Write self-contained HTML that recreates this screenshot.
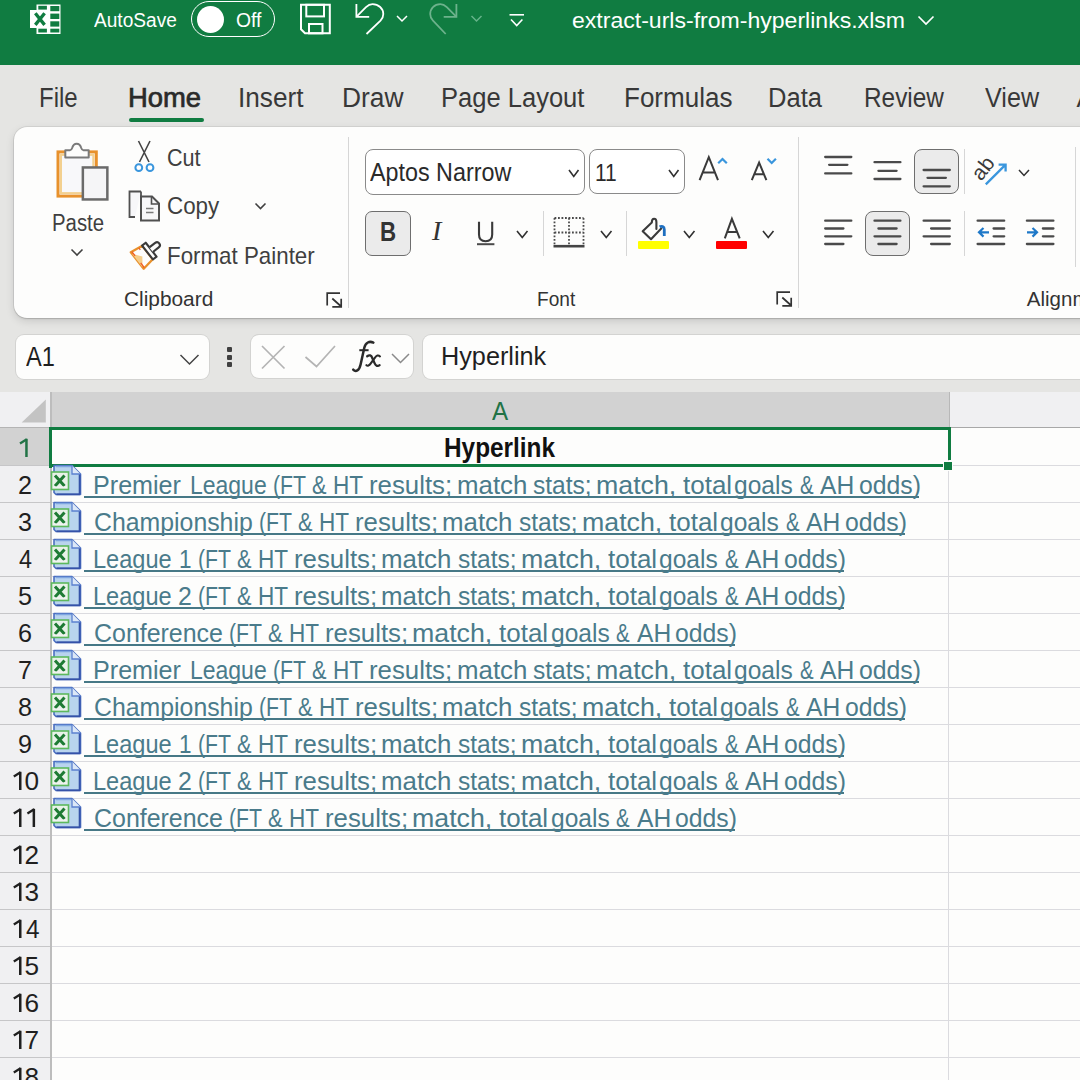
<!DOCTYPE html><html><head><meta charset="utf-8"><style>
html,body{margin:0;padding:0;width:1080px;height:1080px;overflow:hidden;background:#E5E5E3}
.t{position:absolute;white-space:nowrap;transform-origin:0 0}
svg{display:block}
</style></head><body>
<div style="position:absolute;left:0px;top:0px;width:1080px;height:1080px;background:#E5E5E3"></div>
<div style="position:absolute;left:0px;top:0px;width:1080px;height:65px;background:#107C41"></div>
<svg style="position:absolute;left:0px;top:0px;overflow:visible;" width="80" height="40" viewBox="0 0 80 40">
<rect x="36.5" y="4.5" width="24" height="29.5" fill="#fff"/>
<rect x="38.3" y="5.8" width="8.6" height="3.8" fill="#107C41"/>
<rect x="50.3" y="6" width="9" height="5.2" fill="#107C41"/>
<rect x="50.3" y="13.6" width="9" height="5.4" fill="#107C41"/>
<rect x="50.3" y="21.3" width="9" height="5.3" fill="#107C41"/>
<rect x="50.3" y="28.7" width="9" height="3.8" fill="#107C41"/>
<rect x="38.3" y="28.7" width="8.6" height="3.8" fill="#107C41"/>
<rect x="30" y="10" width="18.4" height="18" fill="#fff"/>
<path d="M35.3 13.3 L44.6 24.9 M44.6 13.3 L35.3 24.9" stroke="#107C41" stroke-width="3.3" fill="none"/>
</svg>
<div style="position:absolute;left:191px;top:1px;width:84px;height:36px;box-sizing:border-box;border:1.5px solid #fff;border-radius:18px"></div>
<div style="position:absolute;left:197px;top:5.5px;width:27px;height:27px;background:#fff;border-radius:50%"></div>
<svg style="position:absolute;left:290px;top:0px;overflow:visible;" width="50" height="40" viewBox="0 0 50 40">
<path d="M11 4.8 H39.8 V33.3 H15 L11 29.3 Z" fill="none" stroke="#fff" stroke-width="2"/>
<rect x="16.3" y="4.8" width="17.7" height="11.6" fill="none" stroke="#fff" stroke-width="2"/>
<rect x="19" y="24" width="13.5" height="9.3" fill="none" stroke="#fff" stroke-width="2"/>
</svg>
<svg style="position:absolute;left:340px;top:0px;overflow:visible;" width="80" height="40" viewBox="0 0 80 40">
<path d="M16.4 4 V16.8 H29.2" fill="none" stroke="#fff" stroke-width="1.8"/>
<path d="M16.8 16.4 L26 7.2 C28.5 4.8 30.5 4.2 32.5 4.2 C38.5 4.2 43.3 8.5 43.3 14 C43.3 16.8 42.2 19 40.5 20.7 L26.5 34" fill="none" stroke="#fff" stroke-width="1.8"/>
<path d="M57 16 L62 21 L67 16" fill="none" stroke="#fff" stroke-width="1.5"/>
</svg>
<svg style="position:absolute;left:420px;top:0px;overflow:visible;" width="80" height="40" viewBox="0 0 80 40">
<path d="M36.4 4 V16.8 H23.7" fill="none" stroke="#6DB28C" stroke-width="1.8"/>
<path d="M36 16.4 L26.8 7.2 C24.3 4.8 22.3 4.2 20.3 4.2 C14.3 4.2 10.2 8.5 10.2 14 C10.2 16.8 11.3 19 13 20.7 L25.7 34" fill="none" stroke="#6DB28C" stroke-width="1.8"/>
<path d="M51.5 16 L56.5 21 L61.5 16" fill="none" stroke="#66b38a" stroke-width="1.5"/>
</svg>
<svg style="position:absolute;left:500px;top:0px;overflow:visible;" width="40" height="40" viewBox="0 0 40 40">
<path d="M9.5 14.8 H24" stroke="#fff" stroke-width="1.6"/>
<path d="M11 19.5 L16.7 25.5 L22.4 19.5" fill="none" stroke="#fff" stroke-width="1.6"/>
</svg>
<svg style="position:absolute;left:910px;top:0px;overflow:visible;" width="30" height="40" viewBox="0 0 30 40"><path d="M8.5 16.5 L16 24 L23.5 16.5" fill="none" stroke="#fff" stroke-width="1.7"/></svg>
<div style="position:absolute;left:129px;top:118px;width:75px;height:4px;background:#107C41;border-radius:2px"></div>
<div style="position:absolute;left:14px;top:127px;width:1200px;height:191px;background:#FDFDFC;border-radius:13px;box-shadow:0 0 0 0.7px rgba(0,0,0,0.09), 0 1px 1.5px rgba(0,0,0,0.12), 0 3px 9px rgba(0,0,0,0.13)"></div>
<svg style="position:absolute;left:40px;top:135px;overflow:visible;" width="80" height="80" viewBox="0 0 80 80">
<rect x="18" y="16.9" width="38.3" height="44.2" fill="#F8F8FA" stroke="#E8912C" stroke-width="3"/>
<rect x="20.9" y="19.8" width="32.5" height="38.4" fill="none" stroke="#F3D08F" stroke-width="2.2"/>
<path d="M25.3 15.2 H30 C31.5 15.2 31.8 14 32.2 12.8 C33 10 34.5 8.7 36.7 8.7 C38.9 8.7 40.4 10 41.2 12.8 C41.6 14 41.9 15.2 43.4 15.2 H48.7 V22.5 H25.3 Z" fill="#FDFDFC" stroke="#7a7a7a" stroke-width="2" stroke-linejoin="round"/>
<rect x="42.85" y="32.45" width="24.5" height="32" fill="#F5F5F7" stroke="#6a6a6a" stroke-width="2.5"/>
</svg>
<svg style="position:absolute;left:60px;top:240px;overflow:visible;" width="30" height="20" viewBox="0 0 30 20"><path d="M11.5 9.5 L17 15 L22.5 9.5" fill="none" stroke="#404040" stroke-width="1.6"/></svg>
<svg style="position:absolute;left:125px;top:135px;overflow:visible;" width="40" height="40" viewBox="0 0 40 40">
<path d="M13.5 6 L24 27 M25 6 L14.5 27" stroke="#444" stroke-width="1.6" fill="none"/>
<circle cx="13.8" cy="32.7" r="3.4" fill="#fff" stroke="#3A96DD" stroke-width="2"/>
<circle cx="25" cy="32.7" r="3.4" fill="#fff" stroke="#3A96DD" stroke-width="2"/>
</svg>
<svg style="position:absolute;left:120px;top:185px;overflow:visible;" width="50" height="45" viewBox="0 0 50 45">
<path d="M21 6.5 H9.5 V32 H15" fill="#F7F7F9" stroke="#505050" stroke-width="1.8"/>
<path d="M21 6.5 V11" stroke="#505050" stroke-width="1.8"/>
<path d="M21 11.5 H32 L39 18.5 V35.5 H21 Z" fill="#F7F7F9" stroke="#505050" stroke-width="2"/>
<path d="M31.5 11.5 V19 H39" fill="none" stroke="#505050" stroke-width="1.6"/>
<path d="M26 23.5 H33.5 M26 27.5 H33.5" stroke="#7a7a7a" stroke-width="1.6"/>
</svg>
<svg style="position:absolute;left:245px;top:195px;overflow:visible;" width="30" height="20" viewBox="0 0 30 20"><path d="M10.5 8.5 L15.5 13.5 L20.5 8.5" fill="none" stroke="#404040" stroke-width="1.6"/></svg>
<svg style="position:absolute;left:120px;top:230px;overflow:visible;" width="45" height="45" viewBox="0 0 45 45">
<g transform="translate(27.5,22.5) rotate(52)">
<path d="M-8.5 0 L8.5 0 L10.5 13 L-10.5 13 Z" fill="#FDFDFC" stroke="#E8912C" stroke-width="2.3" stroke-linejoin="round"/>
<path d="M-8.5 13 L0 6.5 L8.5 13 Z" fill="#F5CE8A"/>
<path d="M-10.3 11.8 L-5 11.8 M4 11.8 L10 11.8 M-9 4 L-6.5 4" stroke="#F15A24" stroke-width="1.3"/>
<rect x="-8.8" y="-4.6" width="17.6" height="4.6" fill="#FDFDFC" stroke="#3a3a3a" stroke-width="2.1" stroke-linejoin="round"/>
<path d="M-2.9 -4.6 V-12 A2.9 2.9 0 0 1 2.9 -12 V-4.6" fill="#FDFDFC" stroke="#3a3a3a" stroke-width="2.1"/>
</g>
</svg>
<svg style="position:absolute;left:325.8px;top:291.5px;overflow:visible;" width="20" height="20" viewBox="0 0 20 20"><path d="M1.2 13.5 V1.2 H14" fill="none" stroke="#333" stroke-width="1.7"/><path d="M6.3 6.5 L15.2 14.5 M15.2 6.8 V14.9 H6.3" fill="none" stroke="#333" stroke-width="1.7"/></svg>
<div style="position:absolute;left:348px;top:137px;width:1px;height:171px;background:#D6D6D6"></div>
<div style="position:absolute;left:365px;top:149px;width:220px;height:45.5px;box-sizing:border-box;border:1.2px solid #8A8A8A;border-radius:8px;background:#fff"></div>
<svg style="position:absolute;left:567px;top:167.5px;overflow:visible;" width="13.5" height="10.5" viewBox="0 0 13.5 10.5"><path d="M2 2 L6.75 8.5 L11.5 2" fill="none" stroke="#303030" stroke-width="1.6"/></svg>
<div style="position:absolute;left:589px;top:149px;width:96px;height:44.5px;box-sizing:border-box;border:1.2px solid #8A8A8A;border-radius:8px;background:#fff"></div>
<svg style="position:absolute;left:667px;top:167.5px;overflow:visible;" width="13.5" height="10.5" viewBox="0 0 13.5 10.5"><path d="M2 2 L6.75 8.5 L11.5 2" fill="none" stroke="#303030" stroke-width="1.6"/></svg>
<svg style="position:absolute;left:0px;top:0px;overflow:visible;pointer-events:none;" width="1080" height="300" viewBox="0 0 1080 300">
<path d="M699.6 180.2 L708.8 157.2 L718 180.2 M702.6 172.6 H715" fill="none" stroke="#3a3a3a" stroke-width="2"/>
<path d="M718.2 163.3 L722.5 159 L726.8 163.3" fill="none" stroke="#3A96DD" stroke-width="2.2"/>
<path d="M751.8 180.2 L759.1 162.6 L766.4 180.2 M754.3 174.3 H764" fill="none" stroke="#3a3a3a" stroke-width="2"/>
<path d="M767.5 158.8 L771.7 163 L775.9 158.8" fill="none" stroke="#3A96DD" stroke-width="2.2"/>
<path d="M724.8 238.4 L731.9 218.8 L739.7 238.4 M727.3 232 H737.3" fill="none" stroke="#3a3a3a" stroke-width="2"/>
</svg>
<div style="position:absolute;left:365px;top:210.7px;width:46px;height:45.3px;box-sizing:border-box;border:1.5px solid #6E6E6E;border-radius:7px;background:#EBEBEB"></div>
<svg style="position:absolute;left:0px;top:0px;overflow:visible;pointer-events:none;" width="1080" height="300" viewBox="0 0 1080 300"><path d="M479 221.8 V234.6 C479 239.2 481.7 241.2 485.6 241.2 C489.5 241.2 492.2 239.2 492.2 234.6 V221.8" fill="none" stroke="#3a3a3a" stroke-width="2.1"/><path d="M477 244.2 H494.4" stroke="#4a4a4a" stroke-width="2"/></svg>
<svg style="position:absolute;left:515px;top:229px;overflow:visible;" width="14.5" height="10.5" viewBox="0 0 14.5 10.5"><path d="M2 2 L7.25 8.5 L12.5 2" fill="none" stroke="#303030" stroke-width="1.6"/></svg>
<div style="position:absolute;left:542.5px;top:210.7px;width:1px;height:45.7px;background:#D6D6D6"></div>
<svg style="position:absolute;left:550px;top:214px;overflow:visible;" width="40" height="40" viewBox="0 0 40 40">
<g stroke="#4a4a4a" stroke-width="1.8" stroke-dasharray="1.8 1.7" fill="none">
<path d="M4.5 4 H33.5 M4.5 18.5 H33.5 M4.5 4 V31 M19 4 V31 M33.5 4 V31"/>
</g>
<path d="M3.5 32.2 H34.5" stroke="#444" stroke-width="2.6"/>
</svg>
<svg style="position:absolute;left:598.5px;top:229px;overflow:visible;" width="14.5" height="10.5" viewBox="0 0 14.5 10.5"><path d="M2 2 L7.25 8.5 L12.5 2" fill="none" stroke="#303030" stroke-width="1.6"/></svg>
<div style="position:absolute;left:626px;top:210.7px;width:1px;height:45.7px;background:#D6D6D6"></div>
<svg style="position:absolute;left:635px;top:212px;overflow:visible;" width="40" height="40" viewBox="0 0 40 40">
<path d="M16.8 10.5 L7.7 19.3 L16 27.2 L26.5 16.3 Z" fill="#FDFDFC" stroke="none"/>
<path d="M21.4 17 V10 C21.4 8 20.5 6.8 19.1 6.8 C17.7 6.8 16.8 8 16.8 10.5 L7.7 19.3 L16 27.2 L26.2 16.6" fill="none" stroke="#3a3a3a" stroke-width="2.1" stroke-linejoin="round" stroke-linecap="round"/>
<path d="M24.6 14.8 C26.5 13.8 29.3 14.5 29.3 17.5 V24" fill="none" stroke="#1E6FC0" stroke-width="2.8"/>
</svg>
<div style="position:absolute;left:637.6px;top:241.2px;width:31.1px;height:7.5px;background:#FFFF00;border-radius:1px"></div>
<svg style="position:absolute;left:682px;top:229px;overflow:visible;" width="14.5" height="10.5" viewBox="0 0 14.5 10.5"><path d="M2 2 L7.25 8.5 L12.5 2" fill="none" stroke="#303030" stroke-width="1.6"/></svg>
<div style="position:absolute;left:716.3px;top:241.2px;width:30.7px;height:7.7px;background:#FF0000;border-radius:1px"></div>
<svg style="position:absolute;left:760.5px;top:229px;overflow:visible;" width="14.5" height="10.5" viewBox="0 0 14.5 10.5"><path d="M2 2 L7.25 8.5 L12.5 2" fill="none" stroke="#303030" stroke-width="1.6"/></svg>
<svg style="position:absolute;left:775.6px;top:291.3px;overflow:visible;" width="20" height="20" viewBox="0 0 20 20"><path d="M1.2 13.5 V1.2 H14" fill="none" stroke="#333" stroke-width="1.7"/><path d="M6.3 6.5 L15.2 14.5 M15.2 6.8 V14.9 H6.3" fill="none" stroke="#333" stroke-width="1.7"/></svg>
<div style="position:absolute;left:798px;top:137px;width:1px;height:171px;background:#D6D6D6"></div>
<div style="position:absolute;left:914px;top:149.3px;width:45.4px;height:44.8px;box-sizing:border-box;border:1.5px solid #6E6E6E;border-radius:8px;background:#EBEBEB"></div>
<div style="position:absolute;left:864.8px;top:210.9px;width:45.4px;height:44.8px;box-sizing:border-box;border:1.5px solid #6E6E6E;border-radius:8px;background:#EBEBEB"></div>
<svg style="position:absolute;left:0px;top:0px;overflow:visible;pointer-events:none;" width="1080" height="1080" viewBox="0 0 1080 1080"><path d="M825.2 157 H851.3" stroke="#4a4a4a" stroke-width="2.3" stroke-linecap="round"/><path d="M829.1 164.8 H847.4" stroke="#4a4a4a" stroke-width="2.3" stroke-linecap="round"/><path d="M825.2 173.4 H851.3" stroke="#4a4a4a" stroke-width="2.3" stroke-linecap="round"/></svg>
<svg style="position:absolute;left:0px;top:0px;overflow:visible;pointer-events:none;" width="1080" height="1080" viewBox="0 0 1080 1080"><path d="M874.5 162.2 H900.4" stroke="#4a4a4a" stroke-width="2.3" stroke-linecap="round"/><path d="M878.4 170.8 H896.6" stroke="#4a4a4a" stroke-width="2.3" stroke-linecap="round"/><path d="M874.5 179 H900.4" stroke="#4a4a4a" stroke-width="2.3" stroke-linecap="round"/></svg>
<svg style="position:absolute;left:0px;top:0px;overflow:visible;pointer-events:none;" width="1080" height="1080" viewBox="0 0 1080 1080"><path d="M923.6 170 H949.8" stroke="#4a4a4a" stroke-width="2.3" stroke-linecap="round"/><path d="M927.5 177.8 H945.9" stroke="#4a4a4a" stroke-width="2.3" stroke-linecap="round"/><path d="M923.6 186.3 H949.8" stroke="#4a4a4a" stroke-width="2.3" stroke-linecap="round"/></svg>
<svg style="position:absolute;left:0px;top:0px;overflow:visible;pointer-events:none;" width="1080" height="1080" viewBox="0 0 1080 1080"><path d="M825.2 220.7 H851.3" stroke="#4a4a4a" stroke-width="2.3" stroke-linecap="round"/><path d="M825.2 228.5 H843.4" stroke="#4a4a4a" stroke-width="2.3" stroke-linecap="round"/><path d="M825.2 236.3 H851.3" stroke="#4a4a4a" stroke-width="2.3" stroke-linecap="round"/><path d="M825.2 244 H843.4" stroke="#4a4a4a" stroke-width="2.3" stroke-linecap="round"/></svg>
<svg style="position:absolute;left:0px;top:0px;overflow:visible;pointer-events:none;" width="1080" height="1080" viewBox="0 0 1080 1080"><path d="M874.5 220.7 H900.4" stroke="#4a4a4a" stroke-width="2.3" stroke-linecap="round"/><path d="M878.4 228.5 H896.6" stroke="#4a4a4a" stroke-width="2.3" stroke-linecap="round"/><path d="M874.5 236.3 H900.4" stroke="#4a4a4a" stroke-width="2.3" stroke-linecap="round"/><path d="M878.4 244 H896.6" stroke="#4a4a4a" stroke-width="2.3" stroke-linecap="round"/></svg>
<svg style="position:absolute;left:0px;top:0px;overflow:visible;pointer-events:none;" width="1080" height="1080" viewBox="0 0 1080 1080"><path d="M923.6 220.7 H949.8" stroke="#4a4a4a" stroke-width="2.3" stroke-linecap="round"/><path d="M931.1 228.5 H949.8" stroke="#4a4a4a" stroke-width="2.3" stroke-linecap="round"/><path d="M923.6 236.3 H949.8" stroke="#4a4a4a" stroke-width="2.3" stroke-linecap="round"/><path d="M931.1 244 H949.8" stroke="#4a4a4a" stroke-width="2.3" stroke-linecap="round"/></svg>
<svg style="position:absolute;left:0px;top:0px;overflow:visible;pointer-events:none;" width="1080" height="1080" viewBox="0 0 1080 1080"><path d="M977.6 220.7 H1004.1999999999999" stroke="#4a4a4a" stroke-width="2.3" stroke-linecap="round"/><path d="M993.6 228.5 H1004.1999999999999" stroke="#4a4a4a" stroke-width="2.3" stroke-linecap="round"/><path d="M993.6 236.3 H1004.1999999999999" stroke="#4a4a4a" stroke-width="2.3" stroke-linecap="round"/><path d="M977.6 244 H1004.1999999999999" stroke="#4a4a4a" stroke-width="2.3" stroke-linecap="round"/></svg>
<svg style="position:absolute;left:0px;top:0px;overflow:visible;pointer-events:none;" width="1080" height="1080" viewBox="0 0 1080 1080"><path d="M1026.8999999999999 220.7 H1053.4" stroke="#4a4a4a" stroke-width="2.3" stroke-linecap="round"/><path d="M1042.8999999999999 228.5 H1053.4" stroke="#4a4a4a" stroke-width="2.3" stroke-linecap="round"/><path d="M1042.8999999999999 236.3 H1053.4" stroke="#4a4a4a" stroke-width="2.3" stroke-linecap="round"/><path d="M1026.8999999999999 244 H1053.4" stroke="#4a4a4a" stroke-width="2.3" stroke-linecap="round"/></svg>
<svg style="position:absolute;left:970px;top:220px;overflow:visible;" width="40" height="25" viewBox="0 0 40 25"><path d="M19 12.3 H9 M13.5 8 L9 12.3 L13.5 16.6" fill="none" stroke="#1E78C8" stroke-width="2.2"/></svg>
<svg style="position:absolute;left:1020px;top:220px;overflow:visible;" width="40" height="25" viewBox="0 0 40 25"><path d="M7 12.3 H17 M12.5 8 L17 12.3 L12.5 16.6" fill="none" stroke="#1E78C8" stroke-width="2.2"/></svg>
<div style="position:absolute;left:963.9px;top:149px;width:1px;height:45px;background:#D6D6D6"></div>
<div style="position:absolute;left:963.9px;top:211px;width:1px;height:45px;background:#D6D6D6"></div>
<svg style="position:absolute;left:970px;top:150px;overflow:visible;" width="45" height="40" viewBox="0 0 45 40">
<text x="0" y="0" transform="translate(11.3,31.8) rotate(-52)" font-family="Liberation Sans" font-size="21" fill="#3a3a3a">ab</text>
<path d="M15.8 34.4 L35.6 14.6 M28.6 14.6 H35.6 V21.6" fill="none" stroke="#3A96DD" stroke-width="2.3"/>
</svg>
<svg style="position:absolute;left:1016.8px;top:167.7px;overflow:visible;" width="14" height="9.5" viewBox="0 0 14 9.5"><path d="M2 2 L7.0 7.5 L12 2" fill="none" stroke="#303030" stroke-width="1.5"/></svg>
<div style="position:absolute;left:1074.8px;top:146.7px;width:1px;height:120px;background:#D6D6D6"></div>
<div style="position:absolute;left:15.6px;top:334.5px;width:193.7px;height:44.3px;background:#FDFDFC;border-radius:8px;box-shadow:0 0 0 1px rgba(0,0,0,0.08)"></div>
<svg style="position:absolute;left:175px;top:350px;overflow:visible;" width="30" height="20" viewBox="0 0 30 20"><path d="M5.5 5 L14.5 14 L23.5 5" fill="none" stroke="#444" stroke-width="1.5"/></svg>
<div style="position:absolute;left:226.7px;top:347.2px;width:5.5px;height:5px;background:#404040;border-radius:1px"></div>
<div style="position:absolute;left:226.7px;top:354.7px;width:5.5px;height:5px;background:#404040;border-radius:1px"></div>
<div style="position:absolute;left:226.7px;top:362.2px;width:5.5px;height:5px;background:#404040;border-radius:1px"></div>
<div style="position:absolute;left:250.7px;top:335px;width:162px;height:43.3px;background:#FDFDFC;border-radius:8px;box-shadow:0 0 0 1px rgba(0,0,0,0.08)"></div>
<svg style="position:absolute;left:255px;top:340px;overflow:visible;" width="90" height="35" viewBox="0 0 90 35">
<path d="M7 6 L29.5 28.5 M29.5 6 L7 28.5" stroke="#B4B4B4" stroke-width="1.7" fill="none"/>
<path d="M50.5 17 L61.5 26.5 L80 6" stroke="#B4B4B4" stroke-width="1.7" fill="none"/>
</svg>
<svg style="position:absolute;left:0px;top:0px;overflow:visible;pointer-events:none;" width="1080" height="400" viewBox="0 0 1080 400">
<path d="M353.2 369.6 C 355.8 372.3, 359.2 370.8, 360.6 364.5 L 364.3 347.8 C 365.6 342.4, 369.4 340.8, 373.4 342.6" fill="none" stroke="#2a2a2a" stroke-width="2.5" stroke-linecap="round"/>
<path d="M359.3 350.2 H368.6" stroke="#2a2a2a" stroke-width="2"/>
<path d="M367.2 356.2 C 369.4 354.6, 371.2 355.2, 372.3 358 L 374.8 363.6 C 375.8 366, 377.8 366.6, 379.6 365.2" fill="none" stroke="#2a2a2a" stroke-width="2.3" stroke-linecap="round"/>
<path d="M380 356.4 C 378.3 354.8, 376.6 355.4, 374.8 357.8 L 370.4 363.8 C 369.2 365.6, 367.6 366.2, 366.4 365.2" fill="none" stroke="#2a2a2a" stroke-width="2.1" stroke-linecap="round"/>
</svg>
<svg style="position:absolute;left:388px;top:348px;overflow:visible;" width="26" height="20" viewBox="0 0 26 20"><path d="M4 6 L12.5 14.5 L21 6" fill="none" stroke="#8a8a8a" stroke-width="1.5"/></svg>
<div style="position:absolute;left:423px;top:335px;width:700px;height:44px;background:#FDFDFC;border-radius:8px;box-shadow:0 0 0 1px rgba(0,0,0,0.08)"></div>
<div style="position:absolute;left:0px;top:392px;width:50px;height:36px;background:#F0F0F2"></div>
<svg style="position:absolute;left:0px;top:392px;overflow:visible;" width="50" height="36" viewBox="0 0 50 36"><path d="M45.8 7.6 V30.5 H21.7 Z" fill="#C3C3C3"/></svg>
<div style="position:absolute;left:51px;top:392px;width:898px;height:36px;background:#D2D2D2"></div>
<div style="position:absolute;left:949px;top:392px;width:131px;height:36px;background:#F0F0F2"></div>
<div style="position:absolute;left:949px;top:392px;width:1px;height:36px;background:#B8B8B8"></div>
<div style="position:absolute;left:0px;top:428px;width:50px;height:652px;background:#F0F0F2"></div>
<div style="position:absolute;left:0px;top:428px;width:50px;height:37.5px;background:#D2D2D2"></div>
<div style="position:absolute;left:50px;top:392px;width:1.6px;height:700px;background:#BDBDBD"></div>
<div style="position:absolute;left:51.6px;top:428px;width:1030px;height:652px;background:#FDFDFC"></div>
<div style="position:absolute;left:949px;top:427px;width:131px;height:1.3px;background:#A8A8A8"></div>
<div style="position:absolute;left:0px;top:427px;width:50px;height:1.3px;background:#B4B4B4"></div>
<div style="position:absolute;left:51.6px;top:465px;width:1030px;height:1px;background:#DBDBDF"></div>
<div style="position:absolute;left:0px;top:465px;width:50px;height:1px;background:#C6C6C8"></div>
<div style="position:absolute;left:51.6px;top:502px;width:1030px;height:1px;background:#DBDBDF"></div>
<div style="position:absolute;left:0px;top:502px;width:50px;height:1px;background:#C6C6C8"></div>
<div style="position:absolute;left:51.6px;top:539px;width:1030px;height:1px;background:#DBDBDF"></div>
<div style="position:absolute;left:0px;top:539px;width:50px;height:1px;background:#C6C6C8"></div>
<div style="position:absolute;left:51.6px;top:576px;width:1030px;height:1px;background:#DBDBDF"></div>
<div style="position:absolute;left:0px;top:576px;width:50px;height:1px;background:#C6C6C8"></div>
<div style="position:absolute;left:51.6px;top:613px;width:1030px;height:1px;background:#DBDBDF"></div>
<div style="position:absolute;left:0px;top:613px;width:50px;height:1px;background:#C6C6C8"></div>
<div style="position:absolute;left:51.6px;top:650px;width:1030px;height:1px;background:#DBDBDF"></div>
<div style="position:absolute;left:0px;top:650px;width:50px;height:1px;background:#C6C6C8"></div>
<div style="position:absolute;left:51.6px;top:687px;width:1030px;height:1px;background:#DBDBDF"></div>
<div style="position:absolute;left:0px;top:687px;width:50px;height:1px;background:#C6C6C8"></div>
<div style="position:absolute;left:51.6px;top:724px;width:1030px;height:1px;background:#DBDBDF"></div>
<div style="position:absolute;left:0px;top:724px;width:50px;height:1px;background:#C6C6C8"></div>
<div style="position:absolute;left:51.6px;top:761px;width:1030px;height:1px;background:#DBDBDF"></div>
<div style="position:absolute;left:0px;top:761px;width:50px;height:1px;background:#C6C6C8"></div>
<div style="position:absolute;left:51.6px;top:798px;width:1030px;height:1px;background:#DBDBDF"></div>
<div style="position:absolute;left:0px;top:798px;width:50px;height:1px;background:#C6C6C8"></div>
<div style="position:absolute;left:51.6px;top:835px;width:1030px;height:1px;background:#DBDBDF"></div>
<div style="position:absolute;left:0px;top:835px;width:50px;height:1px;background:#C6C6C8"></div>
<div style="position:absolute;left:51.6px;top:872px;width:1030px;height:1px;background:#DBDBDF"></div>
<div style="position:absolute;left:0px;top:872px;width:50px;height:1px;background:#C6C6C8"></div>
<div style="position:absolute;left:51.6px;top:909px;width:1030px;height:1px;background:#DBDBDF"></div>
<div style="position:absolute;left:0px;top:909px;width:50px;height:1px;background:#C6C6C8"></div>
<div style="position:absolute;left:51.6px;top:946px;width:1030px;height:1px;background:#DBDBDF"></div>
<div style="position:absolute;left:0px;top:946px;width:50px;height:1px;background:#C6C6C8"></div>
<div style="position:absolute;left:51.6px;top:983px;width:1030px;height:1px;background:#DBDBDF"></div>
<div style="position:absolute;left:0px;top:983px;width:50px;height:1px;background:#C6C6C8"></div>
<div style="position:absolute;left:51.6px;top:1020px;width:1030px;height:1px;background:#DBDBDF"></div>
<div style="position:absolute;left:0px;top:1020px;width:50px;height:1px;background:#C6C6C8"></div>
<div style="position:absolute;left:51.6px;top:1057px;width:1030px;height:1px;background:#DBDBDF"></div>
<div style="position:absolute;left:0px;top:1057px;width:50px;height:1px;background:#C6C6C8"></div>
<div style="position:absolute;left:51.6px;top:1094px;width:1030px;height:1px;background:#DBDBDF"></div>
<div style="position:absolute;left:0px;top:1094px;width:50px;height:1px;background:#C6C6C8"></div>
<div style="position:absolute;left:948px;top:428px;width:1px;height:700px;background:#DBDBDF"></div>
<svg style="position:absolute;left:0px;top:0px;overflow:visible;pointer-events:none;" width="60" height="1080" viewBox="0 0 60 1080"><path d="M26.45 438.8 V457" stroke="#217346" stroke-width="2.5"/><path d="M26.8 439.3 L20.0 443.4" stroke="#217346" stroke-width="2.3"/></svg>
<svg style="position:absolute;left:0px;top:0px;overflow:visible;pointer-events:none;" width="60" height="1080" viewBox="0 0 60 1080"><path d="M20.25 771.8 V790" stroke="#1F1F1F" stroke-width="2.5"/><path d="M20.6 772.3 L13.8 776.4" stroke="#1F1F1F" stroke-width="2.3"/></svg>
<svg style="position:absolute;left:0px;top:0px;overflow:visible;pointer-events:none;" width="60" height="1080" viewBox="0 0 60 1080"><path d="M20.25 808.8 V827" stroke="#1F1F1F" stroke-width="2.5"/><path d="M20.6 809.3 L13.8 813.4" stroke="#1F1F1F" stroke-width="2.3"/></svg>
<svg style="position:absolute;left:0px;top:0px;overflow:visible;pointer-events:none;" width="60" height="1080" viewBox="0 0 60 1080"><path d="M33.85 808.8 V827" stroke="#1F1F1F" stroke-width="2.5"/><path d="M34.2 809.3 L27.400000000000002 813.4" stroke="#1F1F1F" stroke-width="2.3"/></svg>
<svg style="position:absolute;left:0px;top:0px;overflow:visible;pointer-events:none;" width="60" height="1080" viewBox="0 0 60 1080"><path d="M20.25 845.8 V864" stroke="#1F1F1F" stroke-width="2.5"/><path d="M20.6 846.3 L13.8 850.4" stroke="#1F1F1F" stroke-width="2.3"/></svg>
<svg style="position:absolute;left:0px;top:0px;overflow:visible;pointer-events:none;" width="60" height="1080" viewBox="0 0 60 1080"><path d="M20.25 882.8 V901" stroke="#1F1F1F" stroke-width="2.5"/><path d="M20.6 883.3 L13.8 887.4" stroke="#1F1F1F" stroke-width="2.3"/></svg>
<svg style="position:absolute;left:0px;top:0px;overflow:visible;pointer-events:none;" width="60" height="1080" viewBox="0 0 60 1080"><path d="M20.25 919.8 V938" stroke="#1F1F1F" stroke-width="2.5"/><path d="M20.6 920.3 L13.8 924.4" stroke="#1F1F1F" stroke-width="2.3"/></svg>
<svg style="position:absolute;left:0px;top:0px;overflow:visible;pointer-events:none;" width="60" height="1080" viewBox="0 0 60 1080"><path d="M20.25 956.8 V975" stroke="#1F1F1F" stroke-width="2.5"/><path d="M20.6 957.3 L13.8 961.4" stroke="#1F1F1F" stroke-width="2.3"/></svg>
<svg style="position:absolute;left:0px;top:0px;overflow:visible;pointer-events:none;" width="60" height="1080" viewBox="0 0 60 1080"><path d="M20.25 993.8 V1012" stroke="#1F1F1F" stroke-width="2.5"/><path d="M20.6 994.3 L13.8 998.4" stroke="#1F1F1F" stroke-width="2.3"/></svg>
<svg style="position:absolute;left:0px;top:0px;overflow:visible;pointer-events:none;" width="60" height="1080" viewBox="0 0 60 1080"><path d="M20.25 1030.8 V1049" stroke="#1F1F1F" stroke-width="2.5"/><path d="M20.6 1031.3 L13.8 1035.4" stroke="#1F1F1F" stroke-width="2.3"/></svg>
<svg style="position:absolute;left:0px;top:0px;overflow:visible;pointer-events:none;" width="60" height="1080" viewBox="0 0 60 1080"><path d="M20.25 1067.8 V1086" stroke="#1F1F1F" stroke-width="2.5"/><path d="M20.6 1068.3 L13.8 1072.4" stroke="#1F1F1F" stroke-width="2.3"/></svg>
<div style="position:absolute;left:49px;top:426.5px;width:901.6px;height:3px;background:#107C41"></div>
<div style="position:absolute;left:49px;top:426.5px;width:3px;height:41px;background:#107C41"></div>
<div style="position:absolute;left:947.6px;top:426.5px;width:3px;height:33.3px;background:#107C41"></div>
<div style="position:absolute;left:49px;top:464.4px;width:893.8px;height:3.1px;background:#107C41"></div>
<div style="position:absolute;left:944px;top:461.5px;width:8px;height:8px;background:#107C41;box-shadow:0 0 0 1px #FDFDFC"></div>
<svg style="position:absolute;left:51.3px;top:464px;overflow:visible;" width="34" height="34" viewBox="0 0 34 34">
<path d="M3 1.5 H21 L29.5 10 V30.5 H5 L3 28.5 Z" fill="#B9D4EE" stroke="#4A6EC0" stroke-width="1.6" stroke-linejoin="round"/>
<path d="M5 2.5 H20.5" stroke="#7FA6E0" stroke-width="1.5"/>
<path d="M21 1.5 V10 H29.5" fill="#DCE8F7" stroke="#5B80CF" stroke-width="1.3"/>
<path d="M28.6 10.5 V30" stroke="#3552A8" stroke-width="1.8"/>
<path d="M5.5 30.3 H29" stroke="#3552A8" stroke-width="1.8"/>
<rect x="0.5" y="8" width="17" height="17.5" fill="#E8F2E8" stroke="#5DB85E" stroke-width="1.6"/>
<path d="M4 11.5 L13.5 22 M13.5 11.5 L4 22" stroke="#1E7B34" stroke-width="3" />
<path d="M2 23.2 H16" stroke="#F2F2F2" stroke-width="1.4"/>
</svg>
<div style="position:absolute;left:84.3px;top:496.3px;width:834.8000000000001px;height:1.7px;background:#467886"></div>
<svg style="position:absolute;left:51.3px;top:501px;overflow:visible;" width="34" height="34" viewBox="0 0 34 34">
<path d="M3 1.5 H21 L29.5 10 V30.5 H5 L3 28.5 Z" fill="#B9D4EE" stroke="#4A6EC0" stroke-width="1.6" stroke-linejoin="round"/>
<path d="M5 2.5 H20.5" stroke="#7FA6E0" stroke-width="1.5"/>
<path d="M21 1.5 V10 H29.5" fill="#DCE8F7" stroke="#5B80CF" stroke-width="1.3"/>
<path d="M28.6 10.5 V30" stroke="#3552A8" stroke-width="1.8"/>
<path d="M5.5 30.3 H29" stroke="#3552A8" stroke-width="1.8"/>
<rect x="0.5" y="8" width="17" height="17.5" fill="#E8F2E8" stroke="#5DB85E" stroke-width="1.6"/>
<path d="M4 11.5 L13.5 22 M13.5 11.5 L4 22" stroke="#1E7B34" stroke-width="3" />
<path d="M2 23.2 H16" stroke="#F2F2F2" stroke-width="1.4"/>
</svg>
<div style="position:absolute;left:84.3px;top:533.3000000000001px;width:820.7px;height:1.7px;background:#467886"></div>
<svg style="position:absolute;left:51.3px;top:538px;overflow:visible;" width="34" height="34" viewBox="0 0 34 34">
<path d="M3 1.5 H21 L29.5 10 V30.5 H5 L3 28.5 Z" fill="#B9D4EE" stroke="#4A6EC0" stroke-width="1.6" stroke-linejoin="round"/>
<path d="M5 2.5 H20.5" stroke="#7FA6E0" stroke-width="1.5"/>
<path d="M21 1.5 V10 H29.5" fill="#DCE8F7" stroke="#5B80CF" stroke-width="1.3"/>
<path d="M28.6 10.5 V30" stroke="#3552A8" stroke-width="1.8"/>
<path d="M5.5 30.3 H29" stroke="#3552A8" stroke-width="1.8"/>
<rect x="0.5" y="8" width="17" height="17.5" fill="#E8F2E8" stroke="#5DB85E" stroke-width="1.6"/>
<path d="M4 11.5 L13.5 22 M13.5 11.5 L4 22" stroke="#1E7B34" stroke-width="3" />
<path d="M2 23.2 H16" stroke="#F2F2F2" stroke-width="1.4"/>
</svg>
<div style="position:absolute;left:84.3px;top:570.3000000000001px;width:759.7px;height:1.7px;background:#467886"></div>
<svg style="position:absolute;left:51.3px;top:575px;overflow:visible;" width="34" height="34" viewBox="0 0 34 34">
<path d="M3 1.5 H21 L29.5 10 V30.5 H5 L3 28.5 Z" fill="#B9D4EE" stroke="#4A6EC0" stroke-width="1.6" stroke-linejoin="round"/>
<path d="M5 2.5 H20.5" stroke="#7FA6E0" stroke-width="1.5"/>
<path d="M21 1.5 V10 H29.5" fill="#DCE8F7" stroke="#5B80CF" stroke-width="1.3"/>
<path d="M28.6 10.5 V30" stroke="#3552A8" stroke-width="1.8"/>
<path d="M5.5 30.3 H29" stroke="#3552A8" stroke-width="1.8"/>
<rect x="0.5" y="8" width="17" height="17.5" fill="#E8F2E8" stroke="#5DB85E" stroke-width="1.6"/>
<path d="M4 11.5 L13.5 22 M13.5 11.5 L4 22" stroke="#1E7B34" stroke-width="3" />
<path d="M2 23.2 H16" stroke="#F2F2F2" stroke-width="1.4"/>
</svg>
<div style="position:absolute;left:84.3px;top:607.3000000000001px;width:759.7px;height:1.7px;background:#467886"></div>
<svg style="position:absolute;left:51.3px;top:612px;overflow:visible;" width="34" height="34" viewBox="0 0 34 34">
<path d="M3 1.5 H21 L29.5 10 V30.5 H5 L3 28.5 Z" fill="#B9D4EE" stroke="#4A6EC0" stroke-width="1.6" stroke-linejoin="round"/>
<path d="M5 2.5 H20.5" stroke="#7FA6E0" stroke-width="1.5"/>
<path d="M21 1.5 V10 H29.5" fill="#DCE8F7" stroke="#5B80CF" stroke-width="1.3"/>
<path d="M28.6 10.5 V30" stroke="#3552A8" stroke-width="1.8"/>
<path d="M5.5 30.3 H29" stroke="#3552A8" stroke-width="1.8"/>
<rect x="0.5" y="8" width="17" height="17.5" fill="#E8F2E8" stroke="#5DB85E" stroke-width="1.6"/>
<path d="M4 11.5 L13.5 22 M13.5 11.5 L4 22" stroke="#1E7B34" stroke-width="3" />
<path d="M2 23.2 H16" stroke="#F2F2F2" stroke-width="1.4"/>
</svg>
<div style="position:absolute;left:84.3px;top:644.3000000000001px;width:651.1000000000001px;height:1.7px;background:#467886"></div>
<svg style="position:absolute;left:51.3px;top:649px;overflow:visible;" width="34" height="34" viewBox="0 0 34 34">
<path d="M3 1.5 H21 L29.5 10 V30.5 H5 L3 28.5 Z" fill="#B9D4EE" stroke="#4A6EC0" stroke-width="1.6" stroke-linejoin="round"/>
<path d="M5 2.5 H20.5" stroke="#7FA6E0" stroke-width="1.5"/>
<path d="M21 1.5 V10 H29.5" fill="#DCE8F7" stroke="#5B80CF" stroke-width="1.3"/>
<path d="M28.6 10.5 V30" stroke="#3552A8" stroke-width="1.8"/>
<path d="M5.5 30.3 H29" stroke="#3552A8" stroke-width="1.8"/>
<rect x="0.5" y="8" width="17" height="17.5" fill="#E8F2E8" stroke="#5DB85E" stroke-width="1.6"/>
<path d="M4 11.5 L13.5 22 M13.5 11.5 L4 22" stroke="#1E7B34" stroke-width="3" />
<path d="M2 23.2 H16" stroke="#F2F2F2" stroke-width="1.4"/>
</svg>
<div style="position:absolute;left:84.3px;top:681.3000000000001px;width:834.8000000000001px;height:1.7px;background:#467886"></div>
<svg style="position:absolute;left:51.3px;top:686px;overflow:visible;" width="34" height="34" viewBox="0 0 34 34">
<path d="M3 1.5 H21 L29.5 10 V30.5 H5 L3 28.5 Z" fill="#B9D4EE" stroke="#4A6EC0" stroke-width="1.6" stroke-linejoin="round"/>
<path d="M5 2.5 H20.5" stroke="#7FA6E0" stroke-width="1.5"/>
<path d="M21 1.5 V10 H29.5" fill="#DCE8F7" stroke="#5B80CF" stroke-width="1.3"/>
<path d="M28.6 10.5 V30" stroke="#3552A8" stroke-width="1.8"/>
<path d="M5.5 30.3 H29" stroke="#3552A8" stroke-width="1.8"/>
<rect x="0.5" y="8" width="17" height="17.5" fill="#E8F2E8" stroke="#5DB85E" stroke-width="1.6"/>
<path d="M4 11.5 L13.5 22 M13.5 11.5 L4 22" stroke="#1E7B34" stroke-width="3" />
<path d="M2 23.2 H16" stroke="#F2F2F2" stroke-width="1.4"/>
</svg>
<div style="position:absolute;left:84.3px;top:718.3000000000001px;width:820.7px;height:1.7px;background:#467886"></div>
<svg style="position:absolute;left:51.3px;top:723px;overflow:visible;" width="34" height="34" viewBox="0 0 34 34">
<path d="M3 1.5 H21 L29.5 10 V30.5 H5 L3 28.5 Z" fill="#B9D4EE" stroke="#4A6EC0" stroke-width="1.6" stroke-linejoin="round"/>
<path d="M5 2.5 H20.5" stroke="#7FA6E0" stroke-width="1.5"/>
<path d="M21 1.5 V10 H29.5" fill="#DCE8F7" stroke="#5B80CF" stroke-width="1.3"/>
<path d="M28.6 10.5 V30" stroke="#3552A8" stroke-width="1.8"/>
<path d="M5.5 30.3 H29" stroke="#3552A8" stroke-width="1.8"/>
<rect x="0.5" y="8" width="17" height="17.5" fill="#E8F2E8" stroke="#5DB85E" stroke-width="1.6"/>
<path d="M4 11.5 L13.5 22 M13.5 11.5 L4 22" stroke="#1E7B34" stroke-width="3" />
<path d="M2 23.2 H16" stroke="#F2F2F2" stroke-width="1.4"/>
</svg>
<div style="position:absolute;left:84.3px;top:755.3000000000001px;width:759.7px;height:1.7px;background:#467886"></div>
<svg style="position:absolute;left:51.3px;top:760px;overflow:visible;" width="34" height="34" viewBox="0 0 34 34">
<path d="M3 1.5 H21 L29.5 10 V30.5 H5 L3 28.5 Z" fill="#B9D4EE" stroke="#4A6EC0" stroke-width="1.6" stroke-linejoin="round"/>
<path d="M5 2.5 H20.5" stroke="#7FA6E0" stroke-width="1.5"/>
<path d="M21 1.5 V10 H29.5" fill="#DCE8F7" stroke="#5B80CF" stroke-width="1.3"/>
<path d="M28.6 10.5 V30" stroke="#3552A8" stroke-width="1.8"/>
<path d="M5.5 30.3 H29" stroke="#3552A8" stroke-width="1.8"/>
<rect x="0.5" y="8" width="17" height="17.5" fill="#E8F2E8" stroke="#5DB85E" stroke-width="1.6"/>
<path d="M4 11.5 L13.5 22 M13.5 11.5 L4 22" stroke="#1E7B34" stroke-width="3" />
<path d="M2 23.2 H16" stroke="#F2F2F2" stroke-width="1.4"/>
</svg>
<div style="position:absolute;left:84.3px;top:792.3000000000001px;width:759.7px;height:1.7px;background:#467886"></div>
<svg style="position:absolute;left:51.3px;top:797px;overflow:visible;" width="34" height="34" viewBox="0 0 34 34">
<path d="M3 1.5 H21 L29.5 10 V30.5 H5 L3 28.5 Z" fill="#B9D4EE" stroke="#4A6EC0" stroke-width="1.6" stroke-linejoin="round"/>
<path d="M5 2.5 H20.5" stroke="#7FA6E0" stroke-width="1.5"/>
<path d="M21 1.5 V10 H29.5" fill="#DCE8F7" stroke="#5B80CF" stroke-width="1.3"/>
<path d="M28.6 10.5 V30" stroke="#3552A8" stroke-width="1.8"/>
<path d="M5.5 30.3 H29" stroke="#3552A8" stroke-width="1.8"/>
<rect x="0.5" y="8" width="17" height="17.5" fill="#E8F2E8" stroke="#5DB85E" stroke-width="1.6"/>
<path d="M4 11.5 L13.5 22 M13.5 11.5 L4 22" stroke="#1E7B34" stroke-width="3" />
<path d="M2 23.2 H16" stroke="#F2F2F2" stroke-width="1.4"/>
</svg>
<div style="position:absolute;left:84.3px;top:829.3000000000001px;width:651.1000000000001px;height:1.7px;background:#467886"></div>
<div id="t0" class="t" style="left:94.00px;top:10.73px;font-size:19.5px;line-height:19.5px;color:#ffffff;font-weight:normal;font-family:'Liberation Sans';font-style:normal;transform:scaleX(0.9795);">AutoSave</div>
<div id="t1" class="t" style="left:236.00px;top:10.73px;font-size:19.5px;line-height:19.5px;color:#ffffff;font-weight:normal;font-family:'Liberation Sans';font-style:normal;transform:scaleX(0.9911);">Off</div>
<div id="t2" class="t" style="left:572.00px;top:10.53px;font-size:21.5px;line-height:21.5px;color:#ffffff;font-weight:normal;font-family:'Liberation Sans';font-style:normal;transform:scaleX(1.0721);">extract-urls-from-hyperlinks.xlsm</div>
<div id="t3" class="t" style="left:39.22px;top:85.25px;font-size:27px;line-height:27px;color:#383838;font-weight:normal;font-family:'Liberation Sans';font-style:normal;transform:scaleX(0.8891);">File</div>
<div id="t4" class="t" style="left:128.47px;top:85.25px;font-size:27px;line-height:27px;color:#2a2a2a;font-weight:normal;font-family:'Liberation Sans';font-style:normal;transform:scaleX(1.0144);-webkit-text-stroke:0.7px #2a2a2a;">Home</div>
<div id="t5" class="t" style="left:237.56px;top:85.25px;font-size:27px;line-height:27px;color:#383838;font-weight:normal;font-family:'Liberation Sans';font-style:normal;transform:scaleX(0.9693);">Insert</div>
<div id="t6" class="t" style="left:342.05px;top:85.25px;font-size:27px;line-height:27px;color:#383838;font-weight:normal;font-family:'Liberation Sans';font-style:normal;transform:scaleX(0.9755);">Draw</div>
<div id="t7" class="t" style="left:440.61px;top:85.25px;font-size:27px;line-height:27px;color:#383838;font-weight:normal;font-family:'Liberation Sans';font-style:normal;transform:scaleX(0.9459);">Page Layout</div>
<div id="t8" class="t" style="left:624.07px;top:85.25px;font-size:27px;line-height:27px;color:#383838;font-weight:normal;font-family:'Liberation Sans';font-style:normal;transform:scaleX(0.9634);">Formulas</div>
<div id="t9" class="t" style="left:768.11px;top:85.25px;font-size:27px;line-height:27px;color:#383838;font-weight:normal;font-family:'Liberation Sans';font-style:normal;transform:scaleX(0.9462);">Data</div>
<div id="t10" class="t" style="left:863.70px;top:85.25px;font-size:27px;line-height:27px;color:#383838;font-weight:normal;font-family:'Liberation Sans';font-style:normal;transform:scaleX(0.9020);">Review</div>
<div id="t11" class="t" style="left:985.00px;top:85.25px;font-size:27px;line-height:27px;color:#383838;font-weight:normal;font-family:'Liberation Sans';font-style:normal;transform:scaleX(0.9311);">View</div>
<div id="t12" class="t" style="left:1076.50px;top:85.25px;font-size:27px;line-height:27px;color:#383838;font-weight:normal;font-family:'Liberation Sans';font-style:normal;transform:scaleX(1.0000);">A</div>
<div id="t13" class="t" style="left:52.11px;top:212.45px;font-size:23px;line-height:23px;color:#3F3F3F;font-weight:normal;font-family:'Liberation Sans';font-style:normal;transform:scaleX(0.8856);">Paste</div>
<div id="t14" class="t" style="left:167.10px;top:145.60px;font-size:24px;line-height:24px;color:#3F3F3F;font-weight:normal;font-family:'Liberation Sans';font-style:normal;transform:scaleX(0.8997);">Cut</div>
<div id="t15" class="t" style="left:167.05px;top:195.14px;font-size:23.6px;line-height:23.6px;color:#3F3F3F;font-weight:normal;font-family:'Liberation Sans';font-style:normal;transform:scaleX(0.9487);">Copy</div>
<div id="t16" class="t" style="left:167.34px;top:244.98px;font-size:23.2px;line-height:23.2px;color:#3F3F3F;font-weight:normal;font-family:'Liberation Sans';font-style:normal;transform:scaleX(0.9632);">Format Painter</div>
<div id="t17" class="t" style="left:123.98px;top:288.57px;font-size:20.5px;line-height:20.5px;color:#333333;font-weight:normal;font-family:'Liberation Sans';font-style:normal;transform:scaleX(1.0169);">Clipboard</div>
<div id="t18" class="t" style="left:370.00px;top:159.54px;font-size:25.6px;line-height:25.6px;color:#2A2A2A;font-weight:normal;font-family:'Liberation Sans';font-style:normal;transform:scaleX(0.9109);">Aptos Narrow</div>
<div id="t19" class="t" style="left:594.74px;top:160.68px;font-size:24.5px;line-height:24.5px;color:#2A2A2A;font-weight:normal;font-family:'Liberation Sans';font-style:normal;transform:scaleX(0.8569);">11</div>
<div id="t20" class="t" style="left:380.49px;top:217.82px;font-size:27.5px;line-height:27.5px;color:#333333;font-weight:bold;font-family:'Liberation Sans';font-style:normal;transform:scaleX(0.8111);">B</div>
<div id="t21" class="t" style="left:432.04px;top:218.25px;font-size:27px;line-height:27px;color:#333333;font-weight:normal;font-family:'Liberation Serif';font-style:italic;transform:scaleX(1.0417);">I</div>
<div id="t22" class="t" style="left:537.06px;top:289.05px;font-size:20.3px;line-height:20.3px;color:#333333;font-weight:normal;font-family:'Liberation Sans';font-style:normal;transform:scaleX(0.9412);">Font</div>
<div id="t23" class="t" style="left:1026.80px;top:289.07px;font-size:20.5px;line-height:20.5px;color:#333333;font-weight:normal;font-family:'Liberation Sans';font-style:normal;transform:scaleX(1.0000);">Alignment</div>
<div id="t24" class="t" style="left:25.60px;top:343.02px;font-size:27.5px;line-height:27.5px;color:#1F1F1F;font-weight:normal;font-family:'Liberation Sans';font-style:normal;transform:scaleX(0.8565);">A1</div>
<div id="t25" class="t" style="left:441.01px;top:344.41px;font-size:25.4px;line-height:25.4px;color:#1F1F1F;font-weight:normal;font-family:'Liberation Sans';font-style:normal;transform:scaleX(0.9939);">Hyperlink</div>
<div id="t26" class="t" style="left:491.60px;top:397.56px;font-size:26.4px;line-height:26.4px;color:#217346;font-weight:normal;font-family:'Liberation Sans';font-style:normal;transform:scaleX(0.9167);">A</div>
<div id="t27" class="t" style="left:17.54px;top:471.63px;font-size:26.2px;line-height:26.2px;color:#1F1F1F;font-weight:normal;font-family:'Liberation Sans';font-style:normal;transform:scaleX(0.9615);">2</div>
<div id="t28" class="t" style="left:17.54px;top:508.63px;font-size:26.2px;line-height:26.2px;color:#1F1F1F;font-weight:normal;font-family:'Liberation Sans';font-style:normal;transform:scaleX(0.9615);">3</div>
<div id="t29" class="t" style="left:18.50px;top:545.63px;font-size:26.2px;line-height:26.2px;color:#1F1F1F;font-weight:normal;font-family:'Liberation Sans';font-style:normal;transform:scaleX(0.8929);">4</div>
<div id="t30" class="t" style="left:17.54px;top:582.63px;font-size:26.2px;line-height:26.2px;color:#1F1F1F;font-weight:normal;font-family:'Liberation Sans';font-style:normal;transform:scaleX(0.9615);">5</div>
<div id="t31" class="t" style="left:17.54px;top:619.63px;font-size:26.2px;line-height:26.2px;color:#1F1F1F;font-weight:normal;font-family:'Liberation Sans';font-style:normal;transform:scaleX(0.9615);">6</div>
<div id="t32" class="t" style="left:17.54px;top:656.63px;font-size:26.2px;line-height:26.2px;color:#1F1F1F;font-weight:normal;font-family:'Liberation Sans';font-style:normal;transform:scaleX(0.9615);">7</div>
<div id="t33" class="t" style="left:17.54px;top:693.63px;font-size:26.2px;line-height:26.2px;color:#1F1F1F;font-weight:normal;font-family:'Liberation Sans';font-style:normal;transform:scaleX(0.9615);">8</div>
<div id="t34" class="t" style="left:17.54px;top:730.63px;font-size:26.2px;line-height:26.2px;color:#1F1F1F;font-weight:normal;font-family:'Liberation Sans';font-style:normal;transform:scaleX(0.9615);">9</div>
<div id="t35" class="t" style="left:24.60px;top:767.63px;font-size:26.2px;line-height:26.2px;color:#1F1F1F;font-weight:normal;font-family:'Liberation Sans';font-style:normal;transform:scaleX(1.0000);">0</div>
<div id="t36" class="t" style="left:24.60px;top:841.63px;font-size:26.2px;line-height:26.2px;color:#1F1F1F;font-weight:normal;font-family:'Liberation Sans';font-style:normal;transform:scaleX(1.0000);">2</div>
<div id="t37" class="t" style="left:24.60px;top:878.63px;font-size:26.2px;line-height:26.2px;color:#1F1F1F;font-weight:normal;font-family:'Liberation Sans';font-style:normal;transform:scaleX(1.0000);">3</div>
<div id="t38" class="t" style="left:25.60px;top:915.63px;font-size:26.2px;line-height:26.2px;color:#1F1F1F;font-weight:normal;font-family:'Liberation Sans';font-style:normal;transform:scaleX(0.9286);">4</div>
<div id="t39" class="t" style="left:24.60px;top:952.63px;font-size:26.2px;line-height:26.2px;color:#1F1F1F;font-weight:normal;font-family:'Liberation Sans';font-style:normal;transform:scaleX(1.0000);">5</div>
<div id="t40" class="t" style="left:24.60px;top:989.63px;font-size:26.2px;line-height:26.2px;color:#1F1F1F;font-weight:normal;font-family:'Liberation Sans';font-style:normal;transform:scaleX(1.0000);">6</div>
<div id="t41" class="t" style="left:24.60px;top:1026.63px;font-size:26.2px;line-height:26.2px;color:#1F1F1F;font-weight:normal;font-family:'Liberation Sans';font-style:normal;transform:scaleX(1.0000);">7</div>
<div id="t42" class="t" style="left:24.60px;top:1063.63px;font-size:26.2px;line-height:26.2px;color:#1F1F1F;font-weight:normal;font-family:'Liberation Sans';font-style:normal;transform:scaleX(1.0000);">8</div>
<div id="t43" class="t" style="left:443.60px;top:435.25px;font-size:27px;line-height:27px;color:#111111;font-weight:bold;font-family:'Liberation Sans';font-style:normal;transform:scaleX(0.9022);">Hyperlink</div>
<div id="t44" class="t" style="left:93.03px;top:472.52px;font-size:25.5px;line-height:25.5px;color:#4A7B8B;font-weight:normal;font-family:'Liberation Sans';font-style:normal;transform:scaleX(0.9855);">Premier</div>
<div id="t45" class="t" style="left:190.00px;top:472.52px;font-size:25.5px;line-height:25.5px;color:#4A7B8B;font-weight:normal;font-family:'Liberation Sans';font-style:normal;transform:scaleX(0.9010);">League</div>
<div id="t46" class="t" style="left:273.07px;top:472.52px;font-size:25.5px;line-height:25.5px;color:#4A7B8B;font-weight:normal;font-family:'Liberation Sans';font-style:normal;transform:scaleX(0.8327);">(FT</div>
<div id="t47" class="t" style="left:312.20px;top:472.52px;font-size:25.5px;line-height:25.5px;color:#4A7B8B;font-weight:normal;font-family:'Liberation Sans';font-style:normal;transform:scaleX(0.8529);">&amp;</div>
<div id="t48" class="t" style="left:333.23px;top:472.52px;font-size:25.5px;line-height:25.5px;color:#4A7B8B;font-weight:normal;font-family:'Liberation Sans';font-style:normal;transform:scaleX(0.8849);">HT</div>
<div id="t49" class="t" style="left:369.19px;top:472.52px;font-size:25.5px;line-height:25.5px;color:#4A7B8B;font-weight:normal;font-family:'Liberation Sans';font-style:normal;transform:scaleX(1.0113);">results;</div>
<div id="t50" class="t" style="left:456.59px;top:472.52px;font-size:25.5px;line-height:25.5px;color:#4A7B8B;font-weight:normal;font-family:'Liberation Sans';font-style:normal;transform:scaleX(1.0140);">match</div>
<div id="t51" class="t" style="left:533.00px;top:472.52px;font-size:25.5px;line-height:25.5px;color:#4A7B8B;font-weight:normal;font-family:'Liberation Sans';font-style:normal;transform:scaleX(0.9617);">stats;</div>
<div id="t52" class="t" style="left:595.95px;top:472.52px;font-size:25.5px;line-height:25.5px;color:#4A7B8B;font-weight:normal;font-family:'Liberation Sans';font-style:normal;transform:scaleX(1.0485);">match,</div>
<div id="t53" class="t" style="left:682.60px;top:472.52px;font-size:25.5px;line-height:25.5px;color:#4A7B8B;font-weight:normal;font-family:'Liberation Sans';font-style:normal;transform:scaleX(1.0186);">total</div>
<div id="t54" class="t" style="left:734.24px;top:472.52px;font-size:25.5px;line-height:25.5px;color:#4A7B8B;font-weight:normal;font-family:'Liberation Sans';font-style:normal;transform:scaleX(0.9627);">goals</div>
<div id="t55" class="t" style="left:799.60px;top:472.52px;font-size:25.5px;line-height:25.5px;color:#4A7B8B;font-weight:normal;font-family:'Liberation Sans';font-style:normal;transform:scaleX(0.8000);">&amp;</div>
<div id="t56" class="t" style="left:820.20px;top:472.52px;font-size:25.5px;line-height:25.5px;color:#4A7B8B;font-weight:normal;font-family:'Liberation Sans';font-style:normal;transform:scaleX(0.9645);">AH</div>
<div id="t57" class="t" style="left:858.63px;top:472.52px;font-size:25.5px;line-height:25.5px;color:#4A7B8B;font-weight:normal;font-family:'Liberation Sans';font-style:normal;transform:scaleX(0.9707);">odds)</div>
<div id="t58" class="t" style="left:93.63px;top:509.53px;font-size:25.5px;line-height:25.5px;color:#4A7B8B;font-weight:normal;font-family:'Liberation Sans';font-style:normal;transform:scaleX(0.9739);">Championship</div>
<div id="t59" class="t" style="left:258.97px;top:509.53px;font-size:25.5px;line-height:25.5px;color:#4A7B8B;font-weight:normal;font-family:'Liberation Sans';font-style:normal;transform:scaleX(0.8327);">(FT</div>
<div id="t60" class="t" style="left:298.10px;top:509.53px;font-size:25.5px;line-height:25.5px;color:#4A7B8B;font-weight:normal;font-family:'Liberation Sans';font-style:normal;transform:scaleX(0.8529);">&amp;</div>
<div id="t61" class="t" style="left:319.13px;top:509.53px;font-size:25.5px;line-height:25.5px;color:#4A7B8B;font-weight:normal;font-family:'Liberation Sans';font-style:normal;transform:scaleX(0.8849);">HT</div>
<div id="t62" class="t" style="left:355.09px;top:509.53px;font-size:25.5px;line-height:25.5px;color:#4A7B8B;font-weight:normal;font-family:'Liberation Sans';font-style:normal;transform:scaleX(1.0113);">results;</div>
<div id="t63" class="t" style="left:442.49px;top:509.53px;font-size:25.5px;line-height:25.5px;color:#4A7B8B;font-weight:normal;font-family:'Liberation Sans';font-style:normal;transform:scaleX(1.0140);">match</div>
<div id="t64" class="t" style="left:518.90px;top:509.53px;font-size:25.5px;line-height:25.5px;color:#4A7B8B;font-weight:normal;font-family:'Liberation Sans';font-style:normal;transform:scaleX(0.9617);">stats;</div>
<div id="t65" class="t" style="left:581.85px;top:509.53px;font-size:25.5px;line-height:25.5px;color:#4A7B8B;font-weight:normal;font-family:'Liberation Sans';font-style:normal;transform:scaleX(1.0485);">match,</div>
<div id="t66" class="t" style="left:668.50px;top:509.53px;font-size:25.5px;line-height:25.5px;color:#4A7B8B;font-weight:normal;font-family:'Liberation Sans';font-style:normal;transform:scaleX(1.0186);">total</div>
<div id="t67" class="t" style="left:720.14px;top:509.53px;font-size:25.5px;line-height:25.5px;color:#4A7B8B;font-weight:normal;font-family:'Liberation Sans';font-style:normal;transform:scaleX(0.9627);">goals</div>
<div id="t68" class="t" style="left:785.50px;top:509.53px;font-size:25.5px;line-height:25.5px;color:#4A7B8B;font-weight:normal;font-family:'Liberation Sans';font-style:normal;transform:scaleX(0.8000);">&amp;</div>
<div id="t69" class="t" style="left:806.10px;top:509.53px;font-size:25.5px;line-height:25.5px;color:#4A7B8B;font-weight:normal;font-family:'Liberation Sans';font-style:normal;transform:scaleX(0.9645);">AH</div>
<div id="t70" class="t" style="left:844.53px;top:509.53px;font-size:25.5px;line-height:25.5px;color:#4A7B8B;font-weight:normal;font-family:'Liberation Sans';font-style:normal;transform:scaleX(0.9707);">odds)</div>
<div id="t71" class="t" style="left:93.15px;top:546.53px;font-size:25.5px;line-height:25.5px;color:#4A7B8B;font-weight:normal;font-family:'Liberation Sans';font-style:normal;transform:scaleX(0.9251);">League</div>
<div id="t72" class="t" style="left:179.12px;top:546.53px;font-size:25.5px;line-height:25.5px;color:#4A7B8B;font-weight:normal;font-family:'Liberation Sans';font-style:normal;transform:scaleX(0.8833);">1</div>
<div id="t73" class="t" style="left:197.97px;top:546.53px;font-size:25.5px;line-height:25.5px;color:#4A7B8B;font-weight:normal;font-family:'Liberation Sans';font-style:normal;transform:scaleX(0.8327);">(FT</div>
<div id="t74" class="t" style="left:237.10px;top:546.53px;font-size:25.5px;line-height:25.5px;color:#4A7B8B;font-weight:normal;font-family:'Liberation Sans';font-style:normal;transform:scaleX(0.8529);">&amp;</div>
<div id="t75" class="t" style="left:258.13px;top:546.53px;font-size:25.5px;line-height:25.5px;color:#4A7B8B;font-weight:normal;font-family:'Liberation Sans';font-style:normal;transform:scaleX(0.8849);">HT</div>
<div id="t76" class="t" style="left:294.09px;top:546.53px;font-size:25.5px;line-height:25.5px;color:#4A7B8B;font-weight:normal;font-family:'Liberation Sans';font-style:normal;transform:scaleX(1.0113);">results;</div>
<div id="t77" class="t" style="left:381.49px;top:546.53px;font-size:25.5px;line-height:25.5px;color:#4A7B8B;font-weight:normal;font-family:'Liberation Sans';font-style:normal;transform:scaleX(1.0140);">match</div>
<div id="t78" class="t" style="left:457.90px;top:546.53px;font-size:25.5px;line-height:25.5px;color:#4A7B8B;font-weight:normal;font-family:'Liberation Sans';font-style:normal;transform:scaleX(0.9617);">stats;</div>
<div id="t79" class="t" style="left:520.85px;top:546.53px;font-size:25.5px;line-height:25.5px;color:#4A7B8B;font-weight:normal;font-family:'Liberation Sans';font-style:normal;transform:scaleX(1.0485);">match,</div>
<div id="t80" class="t" style="left:607.50px;top:546.53px;font-size:25.5px;line-height:25.5px;color:#4A7B8B;font-weight:normal;font-family:'Liberation Sans';font-style:normal;transform:scaleX(1.0186);">total</div>
<div id="t81" class="t" style="left:659.14px;top:546.53px;font-size:25.5px;line-height:25.5px;color:#4A7B8B;font-weight:normal;font-family:'Liberation Sans';font-style:normal;transform:scaleX(0.9627);">goals</div>
<div id="t82" class="t" style="left:724.50px;top:546.53px;font-size:25.5px;line-height:25.5px;color:#4A7B8B;font-weight:normal;font-family:'Liberation Sans';font-style:normal;transform:scaleX(0.8000);">&amp;</div>
<div id="t83" class="t" style="left:745.10px;top:546.53px;font-size:25.5px;line-height:25.5px;color:#4A7B8B;font-weight:normal;font-family:'Liberation Sans';font-style:normal;transform:scaleX(0.9645);">AH</div>
<div id="t84" class="t" style="left:783.53px;top:546.53px;font-size:25.5px;line-height:25.5px;color:#4A7B8B;font-weight:normal;font-family:'Liberation Sans';font-style:normal;transform:scaleX(0.9707);">odds)</div>
<div id="t85" class="t" style="left:93.15px;top:583.53px;font-size:25.5px;line-height:25.5px;color:#4A7B8B;font-weight:normal;font-family:'Liberation Sans';font-style:normal;transform:scaleX(0.9251);">League</div>
<div id="t86" class="t" style="left:178.43px;top:583.53px;font-size:25.5px;line-height:25.5px;color:#4A7B8B;font-weight:normal;font-family:'Liberation Sans';font-style:normal;transform:scaleX(0.9750);">2</div>
<div id="t87" class="t" style="left:197.97px;top:583.53px;font-size:25.5px;line-height:25.5px;color:#4A7B8B;font-weight:normal;font-family:'Liberation Sans';font-style:normal;transform:scaleX(0.8327);">(FT</div>
<div id="t88" class="t" style="left:237.10px;top:583.53px;font-size:25.5px;line-height:25.5px;color:#4A7B8B;font-weight:normal;font-family:'Liberation Sans';font-style:normal;transform:scaleX(0.8529);">&amp;</div>
<div id="t89" class="t" style="left:258.13px;top:583.53px;font-size:25.5px;line-height:25.5px;color:#4A7B8B;font-weight:normal;font-family:'Liberation Sans';font-style:normal;transform:scaleX(0.8849);">HT</div>
<div id="t90" class="t" style="left:294.09px;top:583.53px;font-size:25.5px;line-height:25.5px;color:#4A7B8B;font-weight:normal;font-family:'Liberation Sans';font-style:normal;transform:scaleX(1.0113);">results;</div>
<div id="t91" class="t" style="left:381.49px;top:583.53px;font-size:25.5px;line-height:25.5px;color:#4A7B8B;font-weight:normal;font-family:'Liberation Sans';font-style:normal;transform:scaleX(1.0140);">match</div>
<div id="t92" class="t" style="left:457.90px;top:583.53px;font-size:25.5px;line-height:25.5px;color:#4A7B8B;font-weight:normal;font-family:'Liberation Sans';font-style:normal;transform:scaleX(0.9617);">stats;</div>
<div id="t93" class="t" style="left:520.85px;top:583.53px;font-size:25.5px;line-height:25.5px;color:#4A7B8B;font-weight:normal;font-family:'Liberation Sans';font-style:normal;transform:scaleX(1.0485);">match,</div>
<div id="t94" class="t" style="left:607.50px;top:583.53px;font-size:25.5px;line-height:25.5px;color:#4A7B8B;font-weight:normal;font-family:'Liberation Sans';font-style:normal;transform:scaleX(1.0186);">total</div>
<div id="t95" class="t" style="left:659.14px;top:583.53px;font-size:25.5px;line-height:25.5px;color:#4A7B8B;font-weight:normal;font-family:'Liberation Sans';font-style:normal;transform:scaleX(0.9627);">goals</div>
<div id="t96" class="t" style="left:724.50px;top:583.53px;font-size:25.5px;line-height:25.5px;color:#4A7B8B;font-weight:normal;font-family:'Liberation Sans';font-style:normal;transform:scaleX(0.8000);">&amp;</div>
<div id="t97" class="t" style="left:745.10px;top:583.53px;font-size:25.5px;line-height:25.5px;color:#4A7B8B;font-weight:normal;font-family:'Liberation Sans';font-style:normal;transform:scaleX(0.9645);">AH</div>
<div id="t98" class="t" style="left:783.53px;top:583.53px;font-size:25.5px;line-height:25.5px;color:#4A7B8B;font-weight:normal;font-family:'Liberation Sans';font-style:normal;transform:scaleX(0.9707);">odds)</div>
<div id="t99" class="t" style="left:93.62px;top:620.53px;font-size:25.5px;line-height:25.5px;color:#4A7B8B;font-weight:normal;font-family:'Liberation Sans';font-style:normal;transform:scaleX(0.9782);">Conference</div>
<div id="t100" class="t" style="left:228.77px;top:620.53px;font-size:25.5px;line-height:25.5px;color:#4A7B8B;font-weight:normal;font-family:'Liberation Sans';font-style:normal;transform:scaleX(0.8327);">(FT</div>
<div id="t101" class="t" style="left:267.90px;top:620.53px;font-size:25.5px;line-height:25.5px;color:#4A7B8B;font-weight:normal;font-family:'Liberation Sans';font-style:normal;transform:scaleX(0.8529);">&amp;</div>
<div id="t102" class="t" style="left:288.93px;top:620.53px;font-size:25.5px;line-height:25.5px;color:#4A7B8B;font-weight:normal;font-family:'Liberation Sans';font-style:normal;transform:scaleX(0.8849);">HT</div>
<div id="t103" class="t" style="left:324.89px;top:620.53px;font-size:25.5px;line-height:25.5px;color:#4A7B8B;font-weight:normal;font-family:'Liberation Sans';font-style:normal;transform:scaleX(1.0113);">results;</div>
<div id="t104" class="t" style="left:412.25px;top:620.53px;font-size:25.5px;line-height:25.5px;color:#4A7B8B;font-weight:normal;font-family:'Liberation Sans';font-style:normal;transform:scaleX(1.0485);">match,</div>
<div id="t105" class="t" style="left:498.90px;top:620.53px;font-size:25.5px;line-height:25.5px;color:#4A7B8B;font-weight:normal;font-family:'Liberation Sans';font-style:normal;transform:scaleX(1.0186);">total</div>
<div id="t106" class="t" style="left:550.54px;top:620.53px;font-size:25.5px;line-height:25.5px;color:#4A7B8B;font-weight:normal;font-family:'Liberation Sans';font-style:normal;transform:scaleX(0.9627);">goals</div>
<div id="t107" class="t" style="left:615.90px;top:620.53px;font-size:25.5px;line-height:25.5px;color:#4A7B8B;font-weight:normal;font-family:'Liberation Sans';font-style:normal;transform:scaleX(0.8000);">&amp;</div>
<div id="t108" class="t" style="left:636.50px;top:620.53px;font-size:25.5px;line-height:25.5px;color:#4A7B8B;font-weight:normal;font-family:'Liberation Sans';font-style:normal;transform:scaleX(0.9645);">AH</div>
<div id="t109" class="t" style="left:674.93px;top:620.53px;font-size:25.5px;line-height:25.5px;color:#4A7B8B;font-weight:normal;font-family:'Liberation Sans';font-style:normal;transform:scaleX(0.9707);">odds)</div>
<div id="t110" class="t" style="left:93.03px;top:657.53px;font-size:25.5px;line-height:25.5px;color:#4A7B8B;font-weight:normal;font-family:'Liberation Sans';font-style:normal;transform:scaleX(0.9855);">Premier</div>
<div id="t111" class="t" style="left:190.00px;top:657.53px;font-size:25.5px;line-height:25.5px;color:#4A7B8B;font-weight:normal;font-family:'Liberation Sans';font-style:normal;transform:scaleX(0.9010);">League</div>
<div id="t112" class="t" style="left:273.07px;top:657.53px;font-size:25.5px;line-height:25.5px;color:#4A7B8B;font-weight:normal;font-family:'Liberation Sans';font-style:normal;transform:scaleX(0.8327);">(FT</div>
<div id="t113" class="t" style="left:312.20px;top:657.53px;font-size:25.5px;line-height:25.5px;color:#4A7B8B;font-weight:normal;font-family:'Liberation Sans';font-style:normal;transform:scaleX(0.8529);">&amp;</div>
<div id="t114" class="t" style="left:333.23px;top:657.53px;font-size:25.5px;line-height:25.5px;color:#4A7B8B;font-weight:normal;font-family:'Liberation Sans';font-style:normal;transform:scaleX(0.8849);">HT</div>
<div id="t115" class="t" style="left:369.19px;top:657.53px;font-size:25.5px;line-height:25.5px;color:#4A7B8B;font-weight:normal;font-family:'Liberation Sans';font-style:normal;transform:scaleX(1.0113);">results;</div>
<div id="t116" class="t" style="left:456.59px;top:657.53px;font-size:25.5px;line-height:25.5px;color:#4A7B8B;font-weight:normal;font-family:'Liberation Sans';font-style:normal;transform:scaleX(1.0140);">match</div>
<div id="t117" class="t" style="left:533.00px;top:657.53px;font-size:25.5px;line-height:25.5px;color:#4A7B8B;font-weight:normal;font-family:'Liberation Sans';font-style:normal;transform:scaleX(0.9617);">stats;</div>
<div id="t118" class="t" style="left:595.95px;top:657.53px;font-size:25.5px;line-height:25.5px;color:#4A7B8B;font-weight:normal;font-family:'Liberation Sans';font-style:normal;transform:scaleX(1.0485);">match,</div>
<div id="t119" class="t" style="left:682.60px;top:657.53px;font-size:25.5px;line-height:25.5px;color:#4A7B8B;font-weight:normal;font-family:'Liberation Sans';font-style:normal;transform:scaleX(1.0186);">total</div>
<div id="t120" class="t" style="left:734.24px;top:657.53px;font-size:25.5px;line-height:25.5px;color:#4A7B8B;font-weight:normal;font-family:'Liberation Sans';font-style:normal;transform:scaleX(0.9627);">goals</div>
<div id="t121" class="t" style="left:799.60px;top:657.53px;font-size:25.5px;line-height:25.5px;color:#4A7B8B;font-weight:normal;font-family:'Liberation Sans';font-style:normal;transform:scaleX(0.8000);">&amp;</div>
<div id="t122" class="t" style="left:820.20px;top:657.53px;font-size:25.5px;line-height:25.5px;color:#4A7B8B;font-weight:normal;font-family:'Liberation Sans';font-style:normal;transform:scaleX(0.9645);">AH</div>
<div id="t123" class="t" style="left:858.63px;top:657.53px;font-size:25.5px;line-height:25.5px;color:#4A7B8B;font-weight:normal;font-family:'Liberation Sans';font-style:normal;transform:scaleX(0.9707);">odds)</div>
<div id="t124" class="t" style="left:93.63px;top:694.53px;font-size:25.5px;line-height:25.5px;color:#4A7B8B;font-weight:normal;font-family:'Liberation Sans';font-style:normal;transform:scaleX(0.9739);">Championship</div>
<div id="t125" class="t" style="left:258.97px;top:694.53px;font-size:25.5px;line-height:25.5px;color:#4A7B8B;font-weight:normal;font-family:'Liberation Sans';font-style:normal;transform:scaleX(0.8327);">(FT</div>
<div id="t126" class="t" style="left:298.10px;top:694.53px;font-size:25.5px;line-height:25.5px;color:#4A7B8B;font-weight:normal;font-family:'Liberation Sans';font-style:normal;transform:scaleX(0.8529);">&amp;</div>
<div id="t127" class="t" style="left:319.13px;top:694.53px;font-size:25.5px;line-height:25.5px;color:#4A7B8B;font-weight:normal;font-family:'Liberation Sans';font-style:normal;transform:scaleX(0.8849);">HT</div>
<div id="t128" class="t" style="left:355.09px;top:694.53px;font-size:25.5px;line-height:25.5px;color:#4A7B8B;font-weight:normal;font-family:'Liberation Sans';font-style:normal;transform:scaleX(1.0113);">results;</div>
<div id="t129" class="t" style="left:442.49px;top:694.53px;font-size:25.5px;line-height:25.5px;color:#4A7B8B;font-weight:normal;font-family:'Liberation Sans';font-style:normal;transform:scaleX(1.0140);">match</div>
<div id="t130" class="t" style="left:518.90px;top:694.53px;font-size:25.5px;line-height:25.5px;color:#4A7B8B;font-weight:normal;font-family:'Liberation Sans';font-style:normal;transform:scaleX(0.9617);">stats;</div>
<div id="t131" class="t" style="left:581.85px;top:694.53px;font-size:25.5px;line-height:25.5px;color:#4A7B8B;font-weight:normal;font-family:'Liberation Sans';font-style:normal;transform:scaleX(1.0485);">match,</div>
<div id="t132" class="t" style="left:668.50px;top:694.53px;font-size:25.5px;line-height:25.5px;color:#4A7B8B;font-weight:normal;font-family:'Liberation Sans';font-style:normal;transform:scaleX(1.0186);">total</div>
<div id="t133" class="t" style="left:720.14px;top:694.53px;font-size:25.5px;line-height:25.5px;color:#4A7B8B;font-weight:normal;font-family:'Liberation Sans';font-style:normal;transform:scaleX(0.9627);">goals</div>
<div id="t134" class="t" style="left:785.50px;top:694.53px;font-size:25.5px;line-height:25.5px;color:#4A7B8B;font-weight:normal;font-family:'Liberation Sans';font-style:normal;transform:scaleX(0.8000);">&amp;</div>
<div id="t135" class="t" style="left:806.10px;top:694.53px;font-size:25.5px;line-height:25.5px;color:#4A7B8B;font-weight:normal;font-family:'Liberation Sans';font-style:normal;transform:scaleX(0.9645);">AH</div>
<div id="t136" class="t" style="left:844.53px;top:694.53px;font-size:25.5px;line-height:25.5px;color:#4A7B8B;font-weight:normal;font-family:'Liberation Sans';font-style:normal;transform:scaleX(0.9707);">odds)</div>
<div id="t137" class="t" style="left:93.15px;top:731.53px;font-size:25.5px;line-height:25.5px;color:#4A7B8B;font-weight:normal;font-family:'Liberation Sans';font-style:normal;transform:scaleX(0.9251);">League</div>
<div id="t138" class="t" style="left:179.12px;top:731.53px;font-size:25.5px;line-height:25.5px;color:#4A7B8B;font-weight:normal;font-family:'Liberation Sans';font-style:normal;transform:scaleX(0.8833);">1</div>
<div id="t139" class="t" style="left:197.97px;top:731.53px;font-size:25.5px;line-height:25.5px;color:#4A7B8B;font-weight:normal;font-family:'Liberation Sans';font-style:normal;transform:scaleX(0.8327);">(FT</div>
<div id="t140" class="t" style="left:237.10px;top:731.53px;font-size:25.5px;line-height:25.5px;color:#4A7B8B;font-weight:normal;font-family:'Liberation Sans';font-style:normal;transform:scaleX(0.8529);">&amp;</div>
<div id="t141" class="t" style="left:258.13px;top:731.53px;font-size:25.5px;line-height:25.5px;color:#4A7B8B;font-weight:normal;font-family:'Liberation Sans';font-style:normal;transform:scaleX(0.8849);">HT</div>
<div id="t142" class="t" style="left:294.09px;top:731.53px;font-size:25.5px;line-height:25.5px;color:#4A7B8B;font-weight:normal;font-family:'Liberation Sans';font-style:normal;transform:scaleX(1.0113);">results;</div>
<div id="t143" class="t" style="left:381.49px;top:731.53px;font-size:25.5px;line-height:25.5px;color:#4A7B8B;font-weight:normal;font-family:'Liberation Sans';font-style:normal;transform:scaleX(1.0140);">match</div>
<div id="t144" class="t" style="left:457.90px;top:731.53px;font-size:25.5px;line-height:25.5px;color:#4A7B8B;font-weight:normal;font-family:'Liberation Sans';font-style:normal;transform:scaleX(0.9617);">stats;</div>
<div id="t145" class="t" style="left:520.85px;top:731.53px;font-size:25.5px;line-height:25.5px;color:#4A7B8B;font-weight:normal;font-family:'Liberation Sans';font-style:normal;transform:scaleX(1.0485);">match,</div>
<div id="t146" class="t" style="left:607.50px;top:731.53px;font-size:25.5px;line-height:25.5px;color:#4A7B8B;font-weight:normal;font-family:'Liberation Sans';font-style:normal;transform:scaleX(1.0186);">total</div>
<div id="t147" class="t" style="left:659.14px;top:731.53px;font-size:25.5px;line-height:25.5px;color:#4A7B8B;font-weight:normal;font-family:'Liberation Sans';font-style:normal;transform:scaleX(0.9627);">goals</div>
<div id="t148" class="t" style="left:724.50px;top:731.53px;font-size:25.5px;line-height:25.5px;color:#4A7B8B;font-weight:normal;font-family:'Liberation Sans';font-style:normal;transform:scaleX(0.8000);">&amp;</div>
<div id="t149" class="t" style="left:745.10px;top:731.53px;font-size:25.5px;line-height:25.5px;color:#4A7B8B;font-weight:normal;font-family:'Liberation Sans';font-style:normal;transform:scaleX(0.9645);">AH</div>
<div id="t150" class="t" style="left:783.53px;top:731.53px;font-size:25.5px;line-height:25.5px;color:#4A7B8B;font-weight:normal;font-family:'Liberation Sans';font-style:normal;transform:scaleX(0.9707);">odds)</div>
<div id="t151" class="t" style="left:93.15px;top:768.53px;font-size:25.5px;line-height:25.5px;color:#4A7B8B;font-weight:normal;font-family:'Liberation Sans';font-style:normal;transform:scaleX(0.9251);">League</div>
<div id="t152" class="t" style="left:178.43px;top:768.53px;font-size:25.5px;line-height:25.5px;color:#4A7B8B;font-weight:normal;font-family:'Liberation Sans';font-style:normal;transform:scaleX(0.9750);">2</div>
<div id="t153" class="t" style="left:197.97px;top:768.53px;font-size:25.5px;line-height:25.5px;color:#4A7B8B;font-weight:normal;font-family:'Liberation Sans';font-style:normal;transform:scaleX(0.8327);">(FT</div>
<div id="t154" class="t" style="left:237.10px;top:768.53px;font-size:25.5px;line-height:25.5px;color:#4A7B8B;font-weight:normal;font-family:'Liberation Sans';font-style:normal;transform:scaleX(0.8529);">&amp;</div>
<div id="t155" class="t" style="left:258.13px;top:768.53px;font-size:25.5px;line-height:25.5px;color:#4A7B8B;font-weight:normal;font-family:'Liberation Sans';font-style:normal;transform:scaleX(0.8849);">HT</div>
<div id="t156" class="t" style="left:294.09px;top:768.53px;font-size:25.5px;line-height:25.5px;color:#4A7B8B;font-weight:normal;font-family:'Liberation Sans';font-style:normal;transform:scaleX(1.0113);">results;</div>
<div id="t157" class="t" style="left:381.49px;top:768.53px;font-size:25.5px;line-height:25.5px;color:#4A7B8B;font-weight:normal;font-family:'Liberation Sans';font-style:normal;transform:scaleX(1.0140);">match</div>
<div id="t158" class="t" style="left:457.90px;top:768.53px;font-size:25.5px;line-height:25.5px;color:#4A7B8B;font-weight:normal;font-family:'Liberation Sans';font-style:normal;transform:scaleX(0.9617);">stats;</div>
<div id="t159" class="t" style="left:520.85px;top:768.53px;font-size:25.5px;line-height:25.5px;color:#4A7B8B;font-weight:normal;font-family:'Liberation Sans';font-style:normal;transform:scaleX(1.0485);">match,</div>
<div id="t160" class="t" style="left:607.50px;top:768.53px;font-size:25.5px;line-height:25.5px;color:#4A7B8B;font-weight:normal;font-family:'Liberation Sans';font-style:normal;transform:scaleX(1.0186);">total</div>
<div id="t161" class="t" style="left:659.14px;top:768.53px;font-size:25.5px;line-height:25.5px;color:#4A7B8B;font-weight:normal;font-family:'Liberation Sans';font-style:normal;transform:scaleX(0.9627);">goals</div>
<div id="t162" class="t" style="left:724.50px;top:768.53px;font-size:25.5px;line-height:25.5px;color:#4A7B8B;font-weight:normal;font-family:'Liberation Sans';font-style:normal;transform:scaleX(0.8000);">&amp;</div>
<div id="t163" class="t" style="left:745.10px;top:768.53px;font-size:25.5px;line-height:25.5px;color:#4A7B8B;font-weight:normal;font-family:'Liberation Sans';font-style:normal;transform:scaleX(0.9645);">AH</div>
<div id="t164" class="t" style="left:783.53px;top:768.53px;font-size:25.5px;line-height:25.5px;color:#4A7B8B;font-weight:normal;font-family:'Liberation Sans';font-style:normal;transform:scaleX(0.9707);">odds)</div>
<div id="t165" class="t" style="left:93.62px;top:805.53px;font-size:25.5px;line-height:25.5px;color:#4A7B8B;font-weight:normal;font-family:'Liberation Sans';font-style:normal;transform:scaleX(0.9782);">Conference</div>
<div id="t166" class="t" style="left:228.77px;top:805.53px;font-size:25.5px;line-height:25.5px;color:#4A7B8B;font-weight:normal;font-family:'Liberation Sans';font-style:normal;transform:scaleX(0.8327);">(FT</div>
<div id="t167" class="t" style="left:267.90px;top:805.53px;font-size:25.5px;line-height:25.5px;color:#4A7B8B;font-weight:normal;font-family:'Liberation Sans';font-style:normal;transform:scaleX(0.8529);">&amp;</div>
<div id="t168" class="t" style="left:288.93px;top:805.53px;font-size:25.5px;line-height:25.5px;color:#4A7B8B;font-weight:normal;font-family:'Liberation Sans';font-style:normal;transform:scaleX(0.8849);">HT</div>
<div id="t169" class="t" style="left:324.89px;top:805.53px;font-size:25.5px;line-height:25.5px;color:#4A7B8B;font-weight:normal;font-family:'Liberation Sans';font-style:normal;transform:scaleX(1.0113);">results;</div>
<div id="t170" class="t" style="left:412.25px;top:805.53px;font-size:25.5px;line-height:25.5px;color:#4A7B8B;font-weight:normal;font-family:'Liberation Sans';font-style:normal;transform:scaleX(1.0485);">match,</div>
<div id="t171" class="t" style="left:498.90px;top:805.53px;font-size:25.5px;line-height:25.5px;color:#4A7B8B;font-weight:normal;font-family:'Liberation Sans';font-style:normal;transform:scaleX(1.0186);">total</div>
<div id="t172" class="t" style="left:550.54px;top:805.53px;font-size:25.5px;line-height:25.5px;color:#4A7B8B;font-weight:normal;font-family:'Liberation Sans';font-style:normal;transform:scaleX(0.9627);">goals</div>
<div id="t173" class="t" style="left:615.90px;top:805.53px;font-size:25.5px;line-height:25.5px;color:#4A7B8B;font-weight:normal;font-family:'Liberation Sans';font-style:normal;transform:scaleX(0.8000);">&amp;</div>
<div id="t174" class="t" style="left:636.50px;top:805.53px;font-size:25.5px;line-height:25.5px;color:#4A7B8B;font-weight:normal;font-family:'Liberation Sans';font-style:normal;transform:scaleX(0.9645);">AH</div>
<div id="t175" class="t" style="left:674.93px;top:805.53px;font-size:25.5px;line-height:25.5px;color:#4A7B8B;font-weight:normal;font-family:'Liberation Sans';font-style:normal;transform:scaleX(0.9707);">odds)</div>
</body></html>
